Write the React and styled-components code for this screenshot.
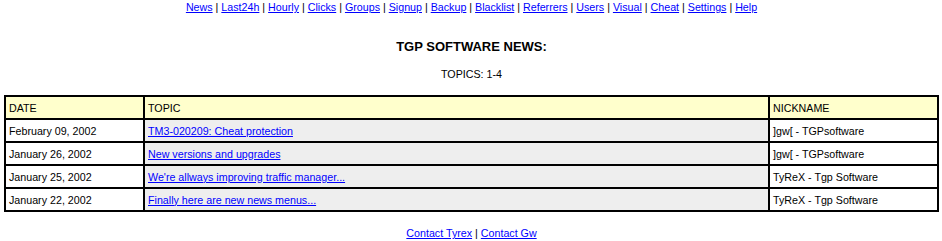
import React from "react";
import styled, { createGlobalStyle } from "styled-components";

const GlobalStyle = createGlobalStyle`
  body {
    margin: 0;
    background: #ffffff;
    font-family: "Liberation Sans", Arial, sans-serif;
    font-size: 10.7px;
    color: #000000;
  }
`;

const Page = styled.div`
  display: flex;
  flex-direction: column;
  align-items: center;
  padding: 1px 3px 0 4px;
`;

const Nav = styled.div`
  text-align: center;
  line-height: 13px;
`;

const NavLink = styled.a`
  color: #0000ff;
  text-decoration: underline;
  cursor: pointer;
`;

const Title = styled.h1`
  margin: 25px 0 0 0;
  font-size: 13px;
  font-weight: bold;
  line-height: 16px;
`;

const Topics = styled.div`
  margin-top: 13px;
  line-height: 13px;
`;

const Table = styled.table`
  margin-top: 14px;
  width: 100%;
  border: 1px solid #000;
  border-spacing: 0;
  font-size: 10.7px;
`;

const Cell = styled.td`
  border: 1px solid #000;
  height: 21px;
  padding: 0 0 0 3px;
  background: ${(p) => (p.$head ? "#ffffcc" : p.$shade ? "#eeeeee" : "#ffffff")};
  width: ${(p) => p.$w || "auto"};
  font-weight: normal;
  text-align: left;
  vertical-align: middle;
`;

const Footer = styled.div`
  margin-top: 15px;
  line-height: 13px;
`;

const navItems = ["News", "Last24h", "Hourly", "Clicks", "Groups", "Signup", "Backup", "Blacklist", "Referrers", "Users", "Visual", "Cheat", "Settings", "Help"];

const news = [
  { date: "February 09, 2002", topic: "TM3-020209: Cheat protection", nick: "]gw[ - TGPsoftware" },
  { date: "January 26, 2002", topic: "New versions and upgrades", nick: "]gw[ - TGPsoftware" },
  { date: "January 25, 2002", topic: "We're allways improving traffic manager...", nick: "TyReX - Tgp Software" },
  { date: "January 22, 2002", topic: "Finally here are new news menus...", nick: "TyReX - Tgp Software" },
];

export default function App() {
  return (
    <>
      <GlobalStyle />
      <Page>
        <Nav>
          {navItems.map((n, i) => (
            <React.Fragment key={n}>
              {i > 0 && " | "}
              <NavLink>{n}</NavLink>
            </React.Fragment>
          ))}
        </Nav>
        <Title>TGP SOFTWARE NEWS:</Title>
        <Topics>TOPICS: 1-4</Topics>
        <Table>
          <thead>
            <tr>
              <Cell as="th" $head $w="134px">DATE</Cell>
              <Cell as="th" $head>TOPIC</Cell>
              <Cell as="th" $head $w="164px">NICKNAME</Cell>
            </tr>
          </thead>
          <tbody>
            {news.map((r) => (
              <tr key={r.topic}>
                <Cell>{r.date}</Cell>
                <Cell $shade><NavLink>{r.topic}</NavLink></Cell>
                <Cell>{r.nick}</Cell>
              </tr>
            ))}
          </tbody>
        </Table>
        <Footer>
          <NavLink>Contact Tyrex</NavLink> | <NavLink>Contact Gw</NavLink>
        </Footer>
      </Page>
    </>
  );
}
